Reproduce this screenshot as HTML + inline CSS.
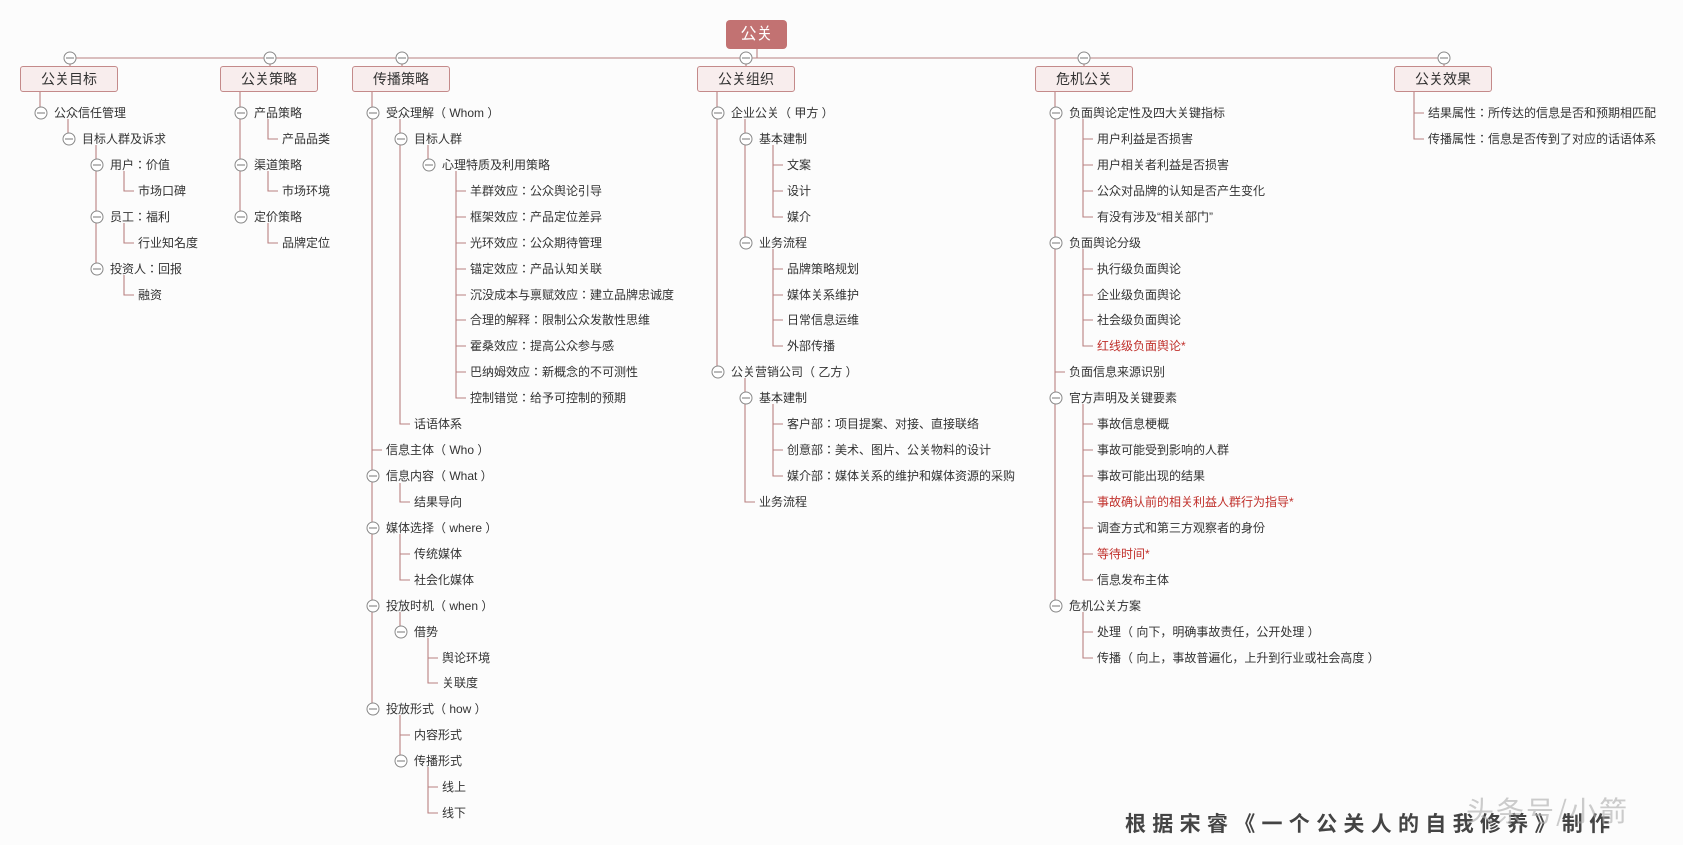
<!DOCTYPE html>
<html><head><meta charset="utf-8">
<style>
html,body{margin:0;padding:0;}
body{width:1683px;height:845px;background:#fcfcfc;position:relative;overflow:hidden;font-family:"Liberation Sans","Noto Sans CJK JP",sans-serif;color:#333;}
svg{position:absolute;left:0;top:0;}
.t{position:absolute;font-size:12px;line-height:16px;white-space:nowrap;color:#333;}
.r{color:#c0302b;}
.b{position:absolute;top:66px;height:24px;width:96px;background:#f8eded;border:1px solid #c48a8a;border-radius:3px;font-size:14px;line-height:24px;text-align:center;color:#333;box-sizing:content-box;}
.c{position:absolute;left:726px;top:20px;width:61px;height:29px;background:#c27272;border-radius:4px;color:#fff;font-size:16px;line-height:29px;text-align:center;}
.foot{position:absolute;left:1125px;top:808px;font-size:21px;font-weight:bold;letter-spacing:6.3px;color:#444;font-family:"Noto Sans CJK SC",sans-serif;white-space:nowrap;}
.wm{position:absolute;left:1466px;top:790px;font-size:28px;color:rgba(170,170,170,0.6);letter-spacing:2px;white-space:nowrap;font-family:"Noto Sans CJK SC",sans-serif;}
</style></head><body>
<svg width="1683" height="845" fill="none" stroke="#b98080" stroke-width="1.1">
<path d="M757 49V58M70 58H1444M70 64V66M270 64V66M402 64V66M746 64V66M1084 64V66M1444 64V66"/>
<path d="M40 92V107M68 119V133M96 145V263M124 171V191H134M124 223V243H134M124 275V295H134"/>
<path d="M240 92V211M268 119V139H278M268 171V191H278M268 223V243H278"/>
<path d="M372 92V703M372 450H382M400 119V424H410M428 145V159M456 171V398H466M456 191H466M456 217H466M456 243H466M456 269H466M456 295H466M456 320H466M456 346H466M456 372H466M400 483V502H410M400 534V580H410M400 554H410M400 612V626M428 638V683H438M428 658H438M400 715V755M400 735H410M428 767V813H438M428 787H438"/>
<path d="M717 92V366M745 119V237M773 145V217H783M773 165H783M773 191H783M773 249V346H783M773 269H783M773 295H783M773 320H783M745 378V502H755M773 404V476H783M773 424H783M773 450H783"/>
<path d="M1055 92V600M1055 372H1065M1083 119V217H1093M1083 139H1093M1083 165H1093M1083 191H1093M1083 249V346H1093M1083 269H1093M1083 295H1093M1083 320H1093M1083 404V580H1093M1083 424H1093M1083 450H1093M1083 476H1093M1083 502H1093M1083 528H1093M1083 554H1093M1083 612V658H1093M1083 632H1093"/>
<path d="M1414 92V139H1424M1414 113H1424"/>
<g stroke="#888" stroke-width="1" fill="#fff">
<circle cx="70" cy="58" r="6"/><circle cx="270" cy="58" r="6"/><circle cx="402" cy="58" r="6"/><circle cx="746" cy="58" r="6"/><circle cx="1084" cy="58" r="6"/><circle cx="1444" cy="58" r="6"/>
<circle cx="41" cy="113" r="6"/><circle cx="69" cy="139" r="6"/><circle cx="97" cy="165" r="6"/><circle cx="97" cy="217" r="6"/><circle cx="97" cy="269" r="6"/>
<circle cx="241" cy="113" r="6"/><circle cx="241" cy="165" r="6"/><circle cx="241" cy="217" r="6"/>
<circle cx="373" cy="113" r="6"/><circle cx="401" cy="139" r="6"/><circle cx="429" cy="165" r="6"/><circle cx="373" cy="476" r="6"/><circle cx="373" cy="528" r="6"/><circle cx="373" cy="606" r="6"/><circle cx="401" cy="632" r="6"/><circle cx="373" cy="709" r="6"/><circle cx="401" cy="761" r="6"/>
<circle cx="718" cy="113" r="6"/><circle cx="746" cy="139" r="6"/><circle cx="746" cy="243" r="6"/><circle cx="718" cy="372" r="6"/><circle cx="746" cy="398" r="6"/>
<circle cx="1056" cy="113" r="6"/><circle cx="1056" cy="243" r="6"/><circle cx="1056" cy="398" r="6"/><circle cx="1056" cy="606" r="6"/>
</g>
<g stroke="#777" stroke-width="1">
<path d="M66 58H74M266 58H274M398 58H406M742 58H750M1080 58H1088M1440 58H1448M37 113H45M65 139H73M93 165H101M93 217H101M93 269H101M237 113H245M237 165H245M237 217H245M369 113H377M397 139H405M425 165H433M369 476H377M369 528H377M369 606H377M397 632H405M369 709H377M397 761H405M714 113H722M742 139H750M742 243H750M714 372H722M742 398H750M1052 113H1060M1052 243H1060M1052 398H1060M1052 606H1060"/>
</g>
</svg>

<div class="c">公关</div>
<div class="b" style="left:20px">公关目标</div>
<div class="b" style="left:220px">公关策略</div>
<div class="b" style="left:352px">传播策略</div>
<div class="b" style="left:697px">公关组织</div>
<div class="b" style="left:1035px">危机公关</div>
<div class="b" style="left:1394px">公关效果</div>

<div class="t" style="left:54px;top:105px">公众信任管理</div>
<div class="t" style="left:82px;top:131px">目标人群及诉求</div>
<div class="t" style="left:110px;top:157px">用户：价值</div>
<div class="t" style="left:138px;top:183px">市场口碑</div>
<div class="t" style="left:110px;top:209px">员工：福利</div>
<div class="t" style="left:138px;top:235px">行业知名度</div>
<div class="t" style="left:110px;top:261px">投资人：回报</div>
<div class="t" style="left:138px;top:287px">融资</div>

<div class="t" style="left:254px;top:105px">产品策略</div>
<div class="t" style="left:282px;top:131px">产品品类</div>
<div class="t" style="left:254px;top:157px">渠道策略</div>
<div class="t" style="left:282px;top:183px">市场环境</div>
<div class="t" style="left:254px;top:209px">定价策略</div>
<div class="t" style="left:282px;top:235px">品牌定位</div>

<div class="t" style="left:386px;top:105px">受众理解（ Whom ）</div>
<div class="t" style="left:414px;top:131px">目标人群</div>
<div class="t" style="left:442px;top:157px">心理特质及利用策略</div>
<div class="t" style="left:470px;top:183px">羊群效应：公众舆论引导</div>
<div class="t" style="left:470px;top:209px">框架效应：产品定位差异</div>
<div class="t" style="left:470px;top:235px">光环效应：公众期待管理</div>
<div class="t" style="left:470px;top:261px">锚定效应：产品认知关联</div>
<div class="t" style="left:470px;top:287px">沉没成本与禀赋效应：建立品牌忠诚度</div>
<div class="t" style="left:470px;top:312px">合理的解释：限制公众发散性思维</div>
<div class="t" style="left:470px;top:338px">霍桑效应：提高公众参与感</div>
<div class="t" style="left:470px;top:364px">巴纳姆效应：新概念的不可测性</div>
<div class="t" style="left:470px;top:390px">控制错觉：给予可控制的预期</div>
<div class="t" style="left:414px;top:416px">话语体系</div>
<div class="t" style="left:386px;top:442px">信息主体（ Who ）</div>
<div class="t" style="left:386px;top:468px">信息内容（ What ）</div>
<div class="t" style="left:414px;top:494px">结果导向</div>
<div class="t" style="left:386px;top:520px">媒体选择（ where ）</div>
<div class="t" style="left:414px;top:546px">传统媒体</div>
<div class="t" style="left:414px;top:572px">社会化媒体</div>
<div class="t" style="left:386px;top:598px">投放时机（ when ）</div>
<div class="t" style="left:414px;top:624px">借势</div>
<div class="t" style="left:442px;top:650px">舆论环境</div>
<div class="t" style="left:442px;top:675px">关联度</div>
<div class="t" style="left:386px;top:701px">投放形式（ how ）</div>
<div class="t" style="left:414px;top:727px">内容形式</div>
<div class="t" style="left:414px;top:753px">传播形式</div>
<div class="t" style="left:442px;top:779px">线上</div>
<div class="t" style="left:442px;top:805px">线下</div>

<div class="t" style="left:731px;top:105px">企业公关（ 甲方 ）</div>
<div class="t" style="left:759px;top:131px">基本建制</div>
<div class="t" style="left:787px;top:157px">文案</div>
<div class="t" style="left:787px;top:183px">设计</div>
<div class="t" style="left:787px;top:209px">媒介</div>
<div class="t" style="left:759px;top:235px">业务流程</div>
<div class="t" style="left:787px;top:261px">品牌策略规划</div>
<div class="t" style="left:787px;top:287px">媒体关系维护</div>
<div class="t" style="left:787px;top:312px">日常信息运维</div>
<div class="t" style="left:787px;top:338px">外部传播</div>
<div class="t" style="left:731px;top:364px">公关营销公司（ 乙方 ）</div>
<div class="t" style="left:759px;top:390px">基本建制</div>
<div class="t" style="left:787px;top:416px">客户部：项目提案、对接、直接联络</div>
<div class="t" style="left:787px;top:442px">创意部：美术、图片、公关物料的设计</div>
<div class="t" style="left:787px;top:468px">媒介部：媒体关系的维护和媒体资源的采购</div>
<div class="t" style="left:759px;top:494px">业务流程</div>

<div class="t" style="left:1069px;top:105px">负面舆论定性及四大关键指标</div>
<div class="t" style="left:1097px;top:131px">用户利益是否损害</div>
<div class="t" style="left:1097px;top:157px">用户相关者利益是否损害</div>
<div class="t" style="left:1097px;top:183px">公众对品牌的认知是否产生变化</div>
<div class="t" style="left:1097px;top:209px">有没有涉及“相关部门”</div>
<div class="t" style="left:1069px;top:235px">负面舆论分级</div>
<div class="t" style="left:1097px;top:261px">执行级负面舆论</div>
<div class="t" style="left:1097px;top:287px">企业级负面舆论</div>
<div class="t" style="left:1097px;top:312px">社会级负面舆论</div>
<div class="t r" style="left:1097px;top:338px">红线级负面舆论*</div>
<div class="t" style="left:1069px;top:364px">负面信息来源识别</div>
<div class="t" style="left:1069px;top:390px">官方声明及关键要素</div>
<div class="t" style="left:1097px;top:416px">事故信息梗概</div>
<div class="t" style="left:1097px;top:442px">事故可能受到影响的人群</div>
<div class="t" style="left:1097px;top:468px">事故可能出现的结果</div>
<div class="t r" style="left:1097px;top:494px">事故确认前的相关利益人群行为指导*</div>
<div class="t" style="left:1097px;top:520px">调查方式和第三方观察者的身份</div>
<div class="t r" style="left:1097px;top:546px">等待时间*</div>
<div class="t" style="left:1097px;top:572px">信息发布主体</div>
<div class="t" style="left:1069px;top:598px">危机公关方案</div>
<div class="t" style="left:1097px;top:624px">处理（ 向下，明确事故责任，公开处理 ）</div>
<div class="t" style="left:1097px;top:650px">传播（ 向上，事故普遍化，上升到行业或社会高度 ）</div>

<div class="t" style="left:1428px;top:105px">结果属性：所传达的信息是否和预期相匹配</div>
<div class="t" style="left:1428px;top:131px">传播属性：信息是否传到了对应的话语体系</div>

<div class="foot">根据宋睿《一个公关人的自我修养》制作</div>
<div class="wm">头条号/小箭</div>
</body></html>
